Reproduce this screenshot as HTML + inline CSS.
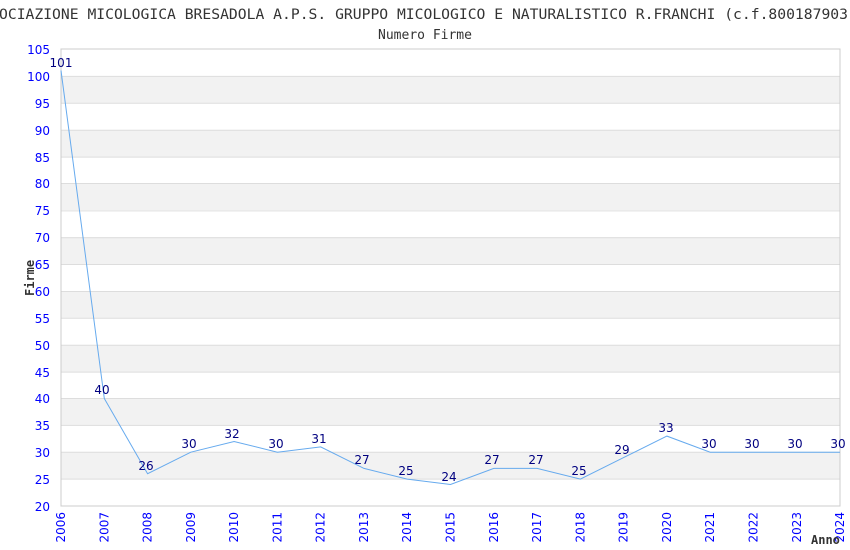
<!DOCTYPE html>
<html><head><meta charset="utf-8"><style>html,body{margin:0;padding:0;background:#fff;width:850px;height:550px;overflow:hidden}</style></head><body>
<svg width="850" height="550" xmlns="http://www.w3.org/2000/svg">
<text x="-1" y="19" font-family="DejaVu Sans Mono, Liberation Mono, monospace" font-size="14" fill="#333" textLength="849" lengthAdjust="spacingAndGlyphs">OCIAZIONE MICOLOGICA BRESADOLA A.P.S. GRUPPO MICOLOGICO E NATURALISTICO R.FRANCHI (c.f.800187903</text>
<text x="425" y="39" text-anchor="middle" font-family="DejaVu Sans Mono, Liberation Mono, monospace" font-size="13" fill="#333">Numero Firme</text>
<rect x="61" y="49" width="779" height="457" fill="#fff" stroke="#ccc" stroke-width="1"/>
<g fill="#f2f2f2">
<rect x="61" y="76" width="779" height="27"/>
<rect x="61" y="130" width="779" height="27"/>
<rect x="61" y="183" width="779" height="27"/>
<rect x="61" y="237" width="779" height="27"/>
<rect x="61" y="291" width="779" height="27"/>
<rect x="61" y="345" width="779" height="27"/>
<rect x="61" y="398" width="779" height="27"/>
<rect x="61" y="452" width="779" height="27"/>
</g>
<g stroke="#ddd" stroke-width="1">
<line x1="61" y1="76.4" x2="840" y2="76.4"/><line x1="61" y1="103.3" x2="840" y2="103.3"/><line x1="61" y1="130.2" x2="840" y2="130.2"/><line x1="61" y1="157.1" x2="840" y2="157.1"/><line x1="61" y1="183.5" x2="840" y2="183.5"/><line x1="61" y1="210.9" x2="840" y2="210.9"/><line x1="61" y1="237.7" x2="840" y2="237.7"/><line x1="61" y1="264.5" x2="840" y2="264.5"/><line x1="61" y1="291.5" x2="840" y2="291.5"/><line x1="61" y1="318.3" x2="840" y2="318.3"/><line x1="61" y1="345.2" x2="840" y2="345.2"/><line x1="61" y1="372.1" x2="840" y2="372.1"/><line x1="61" y1="398.5" x2="840" y2="398.5"/><line x1="61" y1="425.4" x2="840" y2="425.4"/><line x1="61" y1="452.2" x2="840" y2="452.2"/><line x1="61" y1="479.1" x2="840" y2="479.1"/>
</g>
<rect x="61" y="49" width="779" height="457" fill="none" stroke="#ccc" stroke-width="1"/>
<g font-family="DejaVu Sans, Liberation Sans, sans-serif" font-size="12" fill="#0000ff" text-anchor="end">
<text x="50" y="54">105</text><text x="50" y="81">100</text><text x="50" y="108">95</text><text x="50" y="135">90</text><text x="50" y="162">85</text><text x="50" y="188">80</text><text x="50" y="215">75</text><text x="50" y="242">70</text><text x="50" y="269">65</text><text x="50" y="296">60</text><text x="50" y="323">55</text><text x="50" y="350">50</text><text x="50" y="377">45</text><text x="50" y="403">40</text><text x="50" y="430">35</text><text x="50" y="457">30</text><text x="50" y="484">25</text><text x="50" y="511">20</text>
</g>
<g font-family="DejaVu Sans, Liberation Sans, sans-serif" font-size="12" fill="#0000ff" text-anchor="end">
<text transform="translate(65,512) rotate(-90)">2006</text>
<text transform="translate(108.3,512) rotate(-90)">2007</text>
<text transform="translate(151.6,512) rotate(-90)">2008</text>
<text transform="translate(194.8,512) rotate(-90)">2009</text>
<text transform="translate(238.1,512) rotate(-90)">2010</text>
<text transform="translate(281.4,512) rotate(-90)">2011</text>
<text transform="translate(324.7,512) rotate(-90)">2012</text>
<text transform="translate(368,512) rotate(-90)">2013</text>
<text transform="translate(411.2,512) rotate(-90)">2014</text>
<text transform="translate(454.5,512) rotate(-90)">2015</text>
<text transform="translate(497.8,512) rotate(-90)">2016</text>
<text transform="translate(541.1,512) rotate(-90)">2017</text>
<text transform="translate(584.4,512) rotate(-90)">2018</text>
<text transform="translate(627.6,512) rotate(-90)">2019</text>
<text transform="translate(670.9,512) rotate(-90)">2020</text>
<text transform="translate(714.2,512) rotate(-90)">2021</text>
<text transform="translate(757.5,512) rotate(-90)">2022</text>
<text transform="translate(800.8,512) rotate(-90)">2023</text>
<text transform="translate(844,512) rotate(-90)">2024</text>
</g>
<text transform="translate(34,296) rotate(-90)" font-family="DejaVu Sans Mono, monospace" font-size="12" font-weight="bold" fill="#333">Firme</text>
<text x="811" y="544" font-family="DejaVu Sans Mono, monospace" font-size="12" font-weight="bold" fill="#333">Anno</text>
<polyline fill="none" stroke="#66aaee" stroke-width="1" points="61,70.5 104.3,398.5 147.6,473.7 190.8,452.2 234.1,441.5 277.4,452.2 320.7,446.9 364,468.4 407.2,479.1 450.5,484.5 493.8,468.4 537.1,468.4 580.4,479.1 623.6,457.6 666.9,436.1 710.2,452.2 753.5,452.2 796.8,452.2 840,452.2"/>
<g font-family="DejaVu Sans, Liberation Sans, sans-serif" font-size="12" fill="#000080" text-anchor="middle">
<text x="61" y="67">101</text><text x="102" y="394">40</text><text x="146" y="470">26</text><text x="189" y="448">30</text><text x="232" y="438">32</text><text x="276" y="448">30</text><text x="319" y="443">31</text><text x="362" y="464">27</text><text x="406" y="475">25</text><text x="449" y="481">24</text><text x="492" y="464">27</text><text x="536" y="464">27</text><text x="579" y="475">25</text><text x="622" y="454">29</text><text x="666" y="432">33</text><text x="709" y="448">30</text><text x="752" y="448">30</text><text x="795" y="448">30</text><text x="838" y="448">30</text>
</g>
</svg>
</body></html>
